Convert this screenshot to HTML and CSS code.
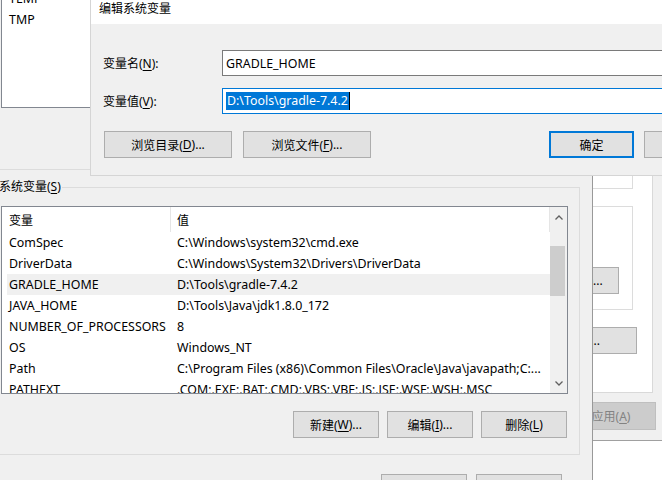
FILE: index.html
```html
<!DOCTYPE html>
<html>
  <head>
    <meta charset="UTF-8" />
    <title>编辑系统变量</title>
    <link rel="stylesheet" href="styles.css">
  </head>
  <body>
    <div class="desk">
      <!-- 系统属性 (behind) -->
      <div class="win sysprops">
        <div class="tabpage">
          <div class="group g-profile"></div>
          <div class="group g-startup">
            <div class="btn btn-settings">设置(<u>T</u>)...</div>
          </div>
          <div class="btn btn-env">环境变量(<u>N</u>)...</div>
        </div>
        <div class="dlg-buttons">
          <div class="btn btn-apply">应用(<u>A</u>)</div>
        </div>
      </div>

      <!-- 环境变量 -->
      <div class="win envvars">
        <div class="group g-user">
          <div class="list user-list">
            <div class="list-body">
              <div class="list-head">
                <div class="c1">变量</div>
                <div class="c2">值</div>
              </div>
              <div class="list-row"><div class="c1">TEMP</div><div class="c2">%USERPROFILE%\AppData\Local\Temp</div></div>
              <div class="list-row"><div class="c1">TMP</div><div class="c2">%USERPROFILE%\AppData\Local\Temp</div></div>
            </div>
          </div>
        </div>

        <div class="group g-system">
          <div class="group-title">系统变量(<u>S</u>)</div>
          <div class="list sys-list">
            <div class="list-body">
              <div class="list-head">
                <div class="c1">变量</div>
                <div class="c2">值</div>
              </div>
              <div class="list-row"><div class="c1">ComSpec</div><div class="c2">C:\Windows\system32\cmd.exe</div></div>
              <div class="list-row"><div class="c1">DriverData</div><div class="c2">C:\Windows\System32\Drivers\DriverData</div></div>
              <div class="list-row selected"><div class="c1">GRADLE_HOME</div><div class="c2">D:\Tools\gradle-7.4.2</div></div>
              <div class="list-row"><div class="c1">JAVA_HOME</div><div class="c2">D:\Tools\Java\jdk1.8.0_172</div></div>
              <div class="list-row"><div class="c1">NUMBER_OF_PROCESSORS</div><div class="c2">8</div></div>
              <div class="list-row"><div class="c1">OS</div><div class="c2">Windows_NT</div></div>
              <div class="list-row"><div class="c1">Path</div><div class="c2">C:\Program Files (x86)\Common Files\Oracle\Java\javapath;C:...</div></div>
              <div class="list-row"><div class="c1">PATHEXT</div><div class="c2">.COM;.EXE;.BAT;.CMD;.VBS;.VBE;.JS;.JSE;.WSF;.WSH;.MSC</div></div>
            </div>
            <div class="scrollbar">
              <div class="sb-arrow">
                <svg width="8" height="5" viewBox="0 0 8 5"><path d="M0.5 4.5 L4 1 L7.5 4.5" fill="none" stroke="#606060" stroke-width="1.3"/></svg>
              </div>
              <div class="sb-thumb"></div>
              <div class="sb-space"></div>
              <div class="sb-arrow">
                <svg width="8" height="5" viewBox="0 0 8 5"><path d="M0.5 0.5 L4 4 L7.5 0.5" fill="none" stroke="#606060" stroke-width="1.3"/></svg>
              </div>
            </div>
          </div>
          <div class="list-buttons">
            <div class="btn w86">新建(<u>W</u>)...</div>
            <div class="btn w86">编辑(<u>I</u>)...</div>
            <div class="btn w86">删除(<u>L</u>)</div>
          </div>
        </div>

        <div class="env-buttons">
          <div class="btn w86">确定</div>
          <div class="btn w86">取消</div>
        </div>
      </div>

      <!-- 编辑系统变量 (front) -->
      <div class="win editvar">
        <div class="title">编辑系统变量</div>
        <div class="edit-body">
          <div class="field">
            <div class="field-label">变量名(<u>N</u>):</div>
            <div class="field-input">GRADLE_HOME</div>
          </div>
          <div class="field">
            <div class="field-label">变量值(<u>V</u>):</div>
            <div class="field-input focus"><span class="sel">D:\Tools\gradle-7.4.2</span><span class="caret"></span></div>
          </div>
          <div class="edit-buttons">
            <div class="btn w128">浏览目录(<u>D</u>)...</div>
            <div class="btn w128">浏览文件(<u>F</u>)...</div>
            <div class="btn w85 default">确定</div>
            <div class="btn w85">取消</div>
          </div>
        </div>
      </div>
    </div>
  </body>
</html>
```

FILE: styles.css
```css
body {
  margin: 0;
  background: #fff;
  font-family: "Noto Sans", "Noto Sans CJK SC", sans-serif;
  font-size: 12px;
  color: #000;
}

.desk {
  position: relative;
  width: 662px;
  height: 480px;
  overflow: hidden;
}

.win {
  position: absolute;
  box-sizing: border-box;
  background: #f0f0f0;
}

u {
  text-decoration-thickness: 1px;
  text-underline-offset: 2px;
}

/* buttons */

.btn {
  box-sizing: border-box;
  height: 27px;
  background: #e1e1e1;
  border: 1px solid #adadad;
  display: flex;
  align-items: center;
  justify-content: center;
  white-space: nowrap;
  flex: none;
}

.w85 {
  width: 85px;
}

.w86 {
  width: 86px;
}

.w128 {
  width: 128px;
}

.btn.default {
  border: 2px solid #0078d7;
}

/* group boxes */

.group {
  position: relative;
  box-sizing: border-box;
  border: 1px solid #dcdcdc;
}

.group-title {
  position: absolute;
  top: -9px;
  left: 7px;
  line-height: 16px;
  padding: 0 1px;
  background: #f0f0f0;
}

/* system properties window */

.sysprops {
  left: 480px;
  top: 0;
  width: 200px;
  height: 441px;
  border-bottom: 1px solid #a0a0a0;
  padding: 20px 0 0 8px;
}

.tabpage {
  box-sizing: border-box;
  width: 165px;
  height: 373px;
  background: #fff;
  border: 1px solid #d9d9d9;
  padding: 79px 19px 0 0;
}

.g-profile {
  height: 89px;
}

.g-startup {
  margin-top: 17px;
  height: 104px;
  padding: 60px 13px 0 0;
}

.btn-settings {
  width: 80px;
  margin-left: auto;
}

.btn-env {
  width: 148px;
  margin: 17px 2px 0 auto;
}

.dlg-buttons {
  display: flex;
  justify-content: flex-end;
  margin-top: 9px;
  padding-right: 24px;
}

.btn-apply {
  width: 90px;
  height: 28px;
  background: #cccccc;
  border-color: #bfbfbf;
  color: #838383;
}

/* environment variables window */

.envvars {
  left: 0;
  top: 0;
  width: 593px;
  height: 520px;
  border-right: 1px solid #999;
}

.g-user {
  margin: -60px 0 0 -10px;
  width: 590px;
  height: 230px;
  padding: 21px 0 0 10px;
}

.g-system {
  margin: 17px 0 0 -10px;
  width: 590px;
  height: 268px;
  padding: 18px 12px 0 10px;
}

.list {
  box-sizing: border-box;
  width: 567px;
  border: 1px solid #828790;
  background: #fff;
  display: flex;
}

.user-list {
  height: 146px;
}

.sys-list {
  height: 188px;
}

.list-body {
  flex: 1;
  min-width: 0;
  overflow: hidden;
}

.list-head,
.list-row {
  display: flex;
}

.list-head {
  height: 25px;
}

.list-row {
  height: 21px;
  align-items: center;
  font-size: 12.4px;
}

.list-row.selected {
  background: linear-gradient(to right, transparent 5px, #f0f0f0 5px);
}

.c1 {
  flex: none;
  box-sizing: border-box;
  width: 169px;
  padding-left: 7px;
  white-space: nowrap;
  overflow: hidden;
}

.c2 {
  flex: 1;
  min-width: 0;
  padding-left: 6px;
  white-space: nowrap;
  overflow: hidden;
}

.list-head .c1,
.list-head .c2 {
  display: flex;
  align-items: center;
  border-right: 1px solid #e5e5e5;
}

.scrollbar {
  flex: none;
  width: 17px;
  background: #f0f0f0;
  display: flex;
  flex-direction: column;
}

.sb-arrow {
  height: 20px;
  display: flex;
  align-items: center;
  justify-content: center;
}

.sb-thumb {
  margin: 19px 2px 0 0;
  height: 50px;
  background: #cdcdcd;
}

.sb-space {
  flex: 1;
}

.list-buttons {
  display: flex;
  justify-content: flex-end;
  gap: 8px;
  margin-top: 17px;
}

.env-buttons {
  display: flex;
  justify-content: flex-end;
  gap: 9px;
  margin-top: 19px;
  padding-right: 30px;
}

/* edit variable window */

.editvar {
  left: 90px;
  top: -6px;
  width: 600px;
  height: 182px;
  border-left: 1px solid #d5d5d5;
  border-bottom: 1px solid #d5d5d5;
}

.title {
  height: 30px;
  line-height: 30px;
  background: #fff;
  padding-left: 8px;
}

.edit-body {
  padding: 26px 0 0 12px;
}

.field {
  display: flex;
  align-items: center;
  height: 26px;
}

.field + .field {
  margin-top: 12px;
}

.field-label {
  width: 119px;
  flex: none;
}

.field-input {
  flex: 1;
  box-sizing: border-box;
  height: 26px;
  border: 1px solid #7a7a7a;
  background: #fff;
  display: flex;
  align-items: center;
  padding-left: 3px;
  white-space: nowrap;
  font-size: 12.4px;
}

.field-input.focus {
  border-color: #0078d7;
}

.sel {
  background: #0078d7;
  color: #fff;
  line-height: 18px;
  padding: 0 1px;
}

.caret {
  width: 1px;
  height: 18px;
  background: #000;
}

.edit-buttons {
  display: flex;
  margin-top: 17px;
  padding-left: 1px;
}

.edit-buttons .w128 + .w128 {
  margin-left: 11px;
}

.edit-buttons .default {
  margin-left: 178px;
}

.edit-buttons .default + .btn {
  margin-left: 10px;
}
```
